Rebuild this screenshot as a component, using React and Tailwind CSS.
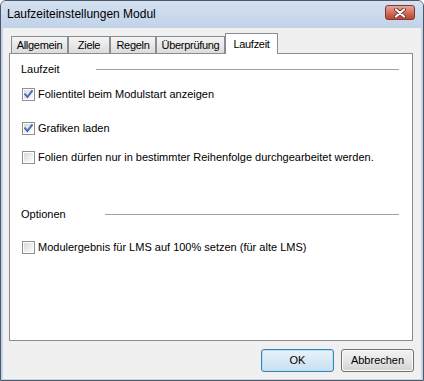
import React from "react";

function Check({ checked }) {
  return (
    <div className="relative w-[13px] h-[13px] shrink-0 border border-[#8e8f8f] bg-white p-[1px]">
      <div className="w-full h-full bg-gradient-to-br from-[#d9d9d9] via-[#ececec] to-[#fbfbfb]" />
      {checked && (
        <svg className="absolute left-[-1px] top-[-1px]" width="13" height="13" viewBox="0 0 13 13">
          <path d="M3.2 6.4 L5.4 8.9 L9.9 3.2" fill="none" stroke="#3b5fb5" strokeWidth="1.9" strokeLinecap="square" />
          <path d="M3.6 6.3 L5.4 8.3 L9.5 3.2" fill="none" stroke="#7d98d6" strokeWidth="0.6" />
        </svg>
      )}
    </div>
  );
}

function Row({ checked, children, className = "" }) {
  return (
    <div className={"flex items-center h-[13px] pl-[12px] gap-[3px] " + className}>
      <Check checked={checked} />
      <span className="text-[11px] leading-[13px] text-black whitespace-nowrap">{children}</span>
    </div>
  );
}

function Heading({ children, lineW, className = "" }) {
  return (
    <div className={"flex items-center h-[15px] pl-[11px] pr-[13px] " + className}>
      <span className="text-[11px] leading-[15px] text-black whitespace-nowrap">{children}</span>
      <div className="ml-auto h-px bg-[#a0a0a0]" style={{ width: lineW }} />
    </div>
  );
}

function Tab({ label, w }) {
  return (
    <div
      className={
        "h-[17px] shrink-0 flex items-center justify-center border border-b-0 border-[#898c95] bg-gradient-to-b from-[#f5f5f5] to-[#dcdcdc] text-[11px] tracking-[-0.3px] text-black " +
        w
      }
    >
      {label}
    </div>
  );
}

export default function App() {
  return (
    <div
      className="w-[424px] h-[381px] bg-white"
      style={{ fontFamily: '"Liberation Sans", Arial, sans-serif' }}
    >
      <div className="w-[424px] h-[381px] flex flex-col border border-[#4c5868] rounded-t-[6px] overflow-hidden bg-[#c4d5ea]">
        {/* title bar */}
        <div className="h-[27px] shrink-0 flex items-start justify-between pl-[6px] pr-[8px] bg-gradient-to-b from-[#d3e1f1] to-[#c2d3e8]">
          <span className="text-[12px] leading-[27px] text-black whitespace-nowrap">Laufzeiteinstellungen Modul</span>
          <div className="mt-[4px] w-[30px] h-[15px] rounded-[3px] border border-[#7a3a34] bg-gradient-to-b from-[#e9a898] via-[#d4705f] to-[#c0412f] flex items-center justify-center">
            <svg width="14" height="10" viewBox="0 0 14 10">
              <path d="M3 1.5 L11 8.5 M11 1.5 L3 8.5" stroke="#6b3b36" strokeWidth="4" strokeLinecap="round" />
              <path d="M3 1.5 L11 8.5 M11 1.5 L3 8.5" stroke="#ffffff" strokeWidth="2.2" strokeLinecap="round" />
            </svg>
          </div>
        </div>
        {/* client */}
        <div className="flex-1 ml-[2px] mr-[2px] mb-[1px] bg-[#f0f0f0] flex flex-col pl-[6px] pr-[7px] pt-[5px]">
          {/* tabs */}
          <div className="flex items-end h-[20px] pl-[2px]">
            <Tab label="Allgemein" w="w-[57px]" />
            <Tab label="Ziele" w="w-[42px]" />
            <Tab label="Regeln" w="w-[46px]" />
            <Tab label="Überprüfung" w="w-[69px]" />
            <div className="relative z-10 h-[21px] -mb-px w-[53px] shrink-0 flex items-start justify-center pt-[2px] border border-b-0 border-[#898c95] bg-white text-[11px] tracking-[-0.3px] text-black">
              Laufzeit
            </div>
          </div>
          {/* panel */}
          <div className="w-[404px] h-[288px] border border-[#898c95] bg-white flex flex-col">
            <Heading lineW="303px" className="mt-[8px]">Laufzeit</Heading>
            <Row checked className="mt-[11px]">Folientitel beim Modulstart anzeigen</Row>
            <Row checked className="mt-[21px]">Grafiken laden</Row>
            <Row className="mt-[16px]">Folien dürfen nur in bestimmter Reihenfolge durchgearbeitet werden.</Row>
            <Heading lineW="294px" className="mt-[43px]">Optionen</Heading>
            <Row className="mt-[19px]">Modulergebnis für LMS auf 100% setzen (für alte LMS)</Row>
          </div>
          {/* buttons */}
          <div className="flex justify-end gap-[7px] mt-[8px] pr-0">
            <button className="w-[73px] h-[23px] rounded-[3px] border border-[#3c7fb1] bg-gradient-to-b from-[#e8f3fb] to-[#c9dff0] shadow-[inset_0_0_0_1px_#b6e2f7] text-[11px] text-black">
              OK
            </button>
            <button className="w-[73px] h-[23px] rounded-[3px] border border-[#707070] bg-gradient-to-b from-[#f2f2f2] via-[#e6e6e6] to-[#d2d2d2] shadow-[inset_0_0_0_1px_#fcfcfc] text-[11px] text-black">
              Abbrechen
            </button>
          </div>
        </div>
      </div>
    </div>
  );
}
